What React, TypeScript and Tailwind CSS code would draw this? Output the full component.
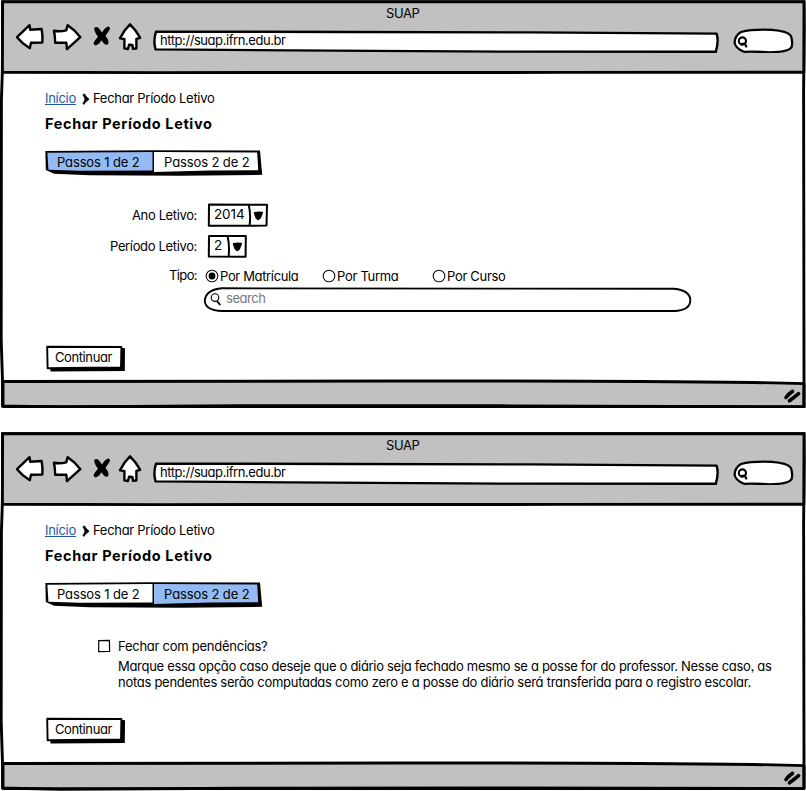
import { useLayoutEffect, useRef, useState } from "react";
import type { ReactNode } from "react";

// A single line of text whose tracking is computed so that it fills `w` pixels.
function Line({ w, text, className = "" }: { w: number; text: string; className?: string }) {
  const ref = useRef<HTMLSpanElement>(null);
  const [spacing, setSpacing] = useState(0);
  useLayoutEffect(() => {
    if (!ref.current) return;
    const natural = ref.current.getBoundingClientRect().width - spacing * text.length;
    setSpacing((w - natural) / text.length);
  }, [w, text]);
  return (
    <span ref={ref} className={`inline-block shrink-0 whitespace-nowrap ${className}`} style={{ letterSpacing: `${spacing}px` }}>
      {text}
    </span>
  );
}

function Toolbar() {
  return (
    <div className="flex h-8 items-start pl-[15px]">
      <svg className="h-8 w-[30px] shrink-0" viewBox="15 21 30 32" fill="#fff" stroke="#000" strokeWidth="2.4" strokeLinejoin="round">
        <path d="M17 37.2 L29.5 25.2 L30.2 29.8 L41.6 29 Q43 36 42.3 42.6 L31 42.8 L29.8 48.2 Q22 43.5 17 37.2Z" />
      </svg>
      <svg className="ml-1.5 h-8 w-8 shrink-0" viewBox="51 21 32 32" fill="#fff" stroke="#000" strokeWidth="2.4" strokeLinejoin="round">
        <path d="M54 30.8 Q60 32 66.2 30.4 L67.7 25.2 Q75 30 80.3 37.2 L67 49.2 L66.3 42.6 L55.2 42.8 Q55 36 54 30.8Z" />
      </svg>
      <svg className="ml-2 h-8 w-5 shrink-0" viewBox="91 21 20 32">
        <path d="M94.2 28 Q96.5 26 99 28.4 L102.2 32.6 Q104.5 27.4 108.5 26.6 Q110.4 27 109.6 29.8 L105.4 36 Q108.9 39.6 108.5 43.6 Q106.6 46 104.2 43.8 L101.2 40.2 Q99.4 44.6 95.4 45.4 Q92.8 44.6 94.2 41.6 L98 36.6 Q94.2 32.4 94.2 28Z" />
      </svg>
      <svg className="ml-1.5 h-8 w-[26px] shrink-0" viewBox="117 21 26 32" fill="#fff" stroke="#000" strokeWidth="2.4" strokeLinejoin="round">
        <path d="M130 24.3 Q136 30 140.2 37.8 L136.4 38.8 L136.4 48.6 L133 48.8 L132.4 45 L129 44.8 L128 49 L124.4 48.4 L124.4 39 L120 38.2 Q124 30 130 24.3Z" />
      </svg>
      <div className="relative ml-2.5 h-8 w-[567px] shrink-0 pl-[7px] pt-[11px] leading-4">
        <svg className="absolute inset-0 h-8 w-[567px]" viewBox="153 21 567 32" fill="#fff" stroke="#000" strokeWidth="2.4" strokeLinejoin="round">
          <path d="M156 31.6 L350 32 L530 32.4 L716.6 33.6 Q719 41 715.8 51.8 L500 51.6 L290 50.4 L155.6 49.4 Q153 41 156 31.6Z" />
        </svg>
        <Line w={125.5} text="http://suap.ifrn.edu.br" className="relative" />
      </div>
      <svg className="ml-3 h-8 w-[63px] shrink-0" viewBox="732 21 63 32" fill="#fff" stroke="#000" strokeWidth="2.3">
        <path d="M741 32 Q752 29 772 29.8 Q788 31 791 36 Q793 43 791.6 47 Q789 52 770 52.3 Q755 51.5 744 51.8 Q735 48 734.6 42.5 Q735 35.5 741 32Z" />
        <circle cx="742.4" cy="41" r="3.6" strokeWidth="2.1" />
        <path d="M740.5 44.4 L744.8 43.6 L746.6 47.4" strokeWidth="2.2" fill="none" />
      </svg>
    </div>
  );
}

function ResizeGrip() {
  return (
    <g fill="none" stroke="#000" strokeWidth="3.6" strokeLinecap="round">
      <path d="M786 397.5 Q789 393.5 792.5 391.4" />
      <path d="M789.5 400.8 Q794 397.4 798.6 393.6" />
    </g>
  );
}

function BrowserWindow({ tall, children }: { tall: boolean; children: ReactNode }) {
  return (
    <section className={`relative flex flex-col ${tall ? "h-[408px]" : "h-[359px]"}`}>
      <header className="relative mx-[2px] mt-[2px] h-[70px] bg-[#c1c1c1]">
        <div className="flex pl-[384px] pt-[3px] leading-4">
          <Line w={33.5} text="SUAP" />
        </div>
        <div className="-ml-[2px]">
          <Toolbar />
        </div>
      </header>
      <main className="min-h-0 flex-1">{children}</main>
      <footer className="h-[26px]" />
      {tall ? (
        <svg className="absolute inset-0 -z-10 h-[408px] w-[806px]" viewBox="0 0 806 408" fill="none" stroke="#000" strokeWidth="2.9" strokeLinejoin="round">
          <path d="M3 381.5 L400 381 Q700 380.6 804 383.6 L804 407 L400 406.6 L3 406.6Z" fill="#c1c1c1" />
          <ResizeGrip />
          <path d="M2.6 2 L2.4 70 L1.4 100 L1.2 340 L2.5 381 L2.5 406 L60 407 L240 405.8 L500 405.8 L804 406.8 L804 370 L803.6 90 L804.2 30 L804 2Z" />
        </svg>
      ) : (
        <svg className="absolute inset-0 -z-10 h-[359px] w-[806px]" viewBox="0 0 806 359" fill="none" stroke="#000" strokeWidth="2.9" strokeLinejoin="round">
          <path d="M3 331.5 L400 331 Q700 330.6 804 333.6 L804 356.6 L3 356.6Z" fill="#c1c1c1" />
          <g transform="translate(0 -50)">
            <ResizeGrip />
          </g>
          <path d="M2.6 1.8 L2.4 70 L1.4 100 L1.2 290 L2.5 331 L2.5 356 L60 357.4 L240 356.2 L500 356 L804 356.6 L804 320 L803.6 90 L804.2 30 L804 1.8Z" />
        </svg>
      )}
      <svg className="pointer-events-none absolute left-0 top-0 h-20 w-[806px]" viewBox="0 0 806 80" fill="none" stroke="#000" strokeWidth="2.9">
        <path d="M2.4 73 L2.6 1.8 L804 1.8 L803.8 73 M2.5 72.3 L160 72.6 L560 72.4 L804 72.2" />
      </svg>
    </section>
  );
}

function PageHeading() {
  return (
    <>
      <nav className="flex pl-11 pt-[18px] leading-4">
        <a href="#inicio" className="ml-px h-[15px] border-b border-[#1c5aa0] text-[#1c5aa0]">
          <Line w={31} text="Início" />
        </a>
        <svg className="ml-[6px] mt-[3px] h-3 w-2" viewBox="0 0 8 12" stroke="#000" strokeWidth=".6">
          <path d="M0.8 1.8 L2.4 0.8 Q4 3.8 7.2 6.2 Q4 8.4 2 11.4 L0.8 10.6 Q2.4 8.4 2.8 6.2 Q2.2 3.6 0.8 1.8Z" />
        </svg>
        <Line w={121.5} text="Fechar Príodo Letivo" className="ml-[3px]" />
      </nav>
      <h1 className="flex pl-[45px] pt-[8px] text-[14.5px] leading-5 font-bold">
        <Line w={167.5} text="Fechar Período Letivo" />
      </h1>
    </>
  );
}

function Steps({ active }: { active: 1 | 2 }) {
  return (
    <div className="relative ml-11 mt-[15px] flex h-[27px] w-[220px] pt-[5px] leading-4">
      <svg className="absolute inset-0 h-[27px] w-[220px]" viewBox="44 149 220 27">
        <path d="M45.4 151 L150 150.2 L260 150.6 L262.2 174.8 L180 175.8 L90 175.2 L54 173.8 L45.8 170Z" fill="#000" />
        <path d="M47.4 152.8 L152.5 152 L152.5 170.4 L80 170.8 L48.4 169.8Z" fill={active === 1 ? "#93baf2" : "#fff"} />
        <path d="M154 152 L257.2 152.6 L258.2 170.2 L210 170.6 L154 172Z" fill={active === 2 ? "#93baf2" : "#fff"} />
      </svg>
      <Line w={82.5} text="Passos 1 de 2" className="relative ml-[13px]" />
      <Line w={85.5} text="Passos 2 de 2" className="relative ml-[24.5px]" />
    </div>
  );
}

function Select({ value, wide }: { value: string; wide: boolean }) {
  return (
    <div className={`relative flex h-6 pl-[7px] pt-[3px] leading-4 ${wide ? "w-[62px]" : "w-10"}`}>
      {wide ? (
        <svg className="absolute inset-0 h-6 w-[62px]" viewBox="207 203 62 24" fill="#fff" stroke="#000" strokeWidth="2" strokeLinejoin="round">
          <path d="M209 204.6 L267 204.8 L266.5 225.6 L208.8 225.8Z M248.8 205 Q251 215 249.6 225.6" />
          <path d="M254.8 213 Q258 212.2 262 212.8 L259.8 218 L258 219.3 L256.4 217.6Z" fill="#000" />
        </svg>
      ) : (
        <svg className="absolute inset-0 h-6 w-10" viewBox="207 203 40 24" fill="#fff" stroke="#000" strokeWidth="2" strokeLinejoin="round">
          <path d="M209 205 L245.8 205 L245.6 225.8 L208.8 225.6Z M227.6 205 Q229.8 215 228.6 225.6" />
          <path d="M233.8 213 Q237 212.2 241 212.8 L239 218 L237.2 219.3 L235.4 217.6Z" fill="#000" />
        </svg>
      )}
      <Line w={wide ? 30.5 : 9} text={value} className="relative text-[13.5px]" />
    </div>
  );
}

function Radio({ text, w, checked = false }: { text: string; w: number; checked?: boolean }) {
  return (
    <label className="flex shrink-0">
      <svg className="mt-px h-[14px] w-[14px]" viewBox="0 0 14 14" fill="none" stroke="#111" strokeWidth="1.1">
        <circle cx="7" cy="7" r="5.8" />
        {checked && <circle cx="7" cy="7" r="3.4" fill="#000" stroke="none" />}
      </svg>
      <Line w={w} text={text} className="ml-px" />
    </label>
  );
}

function ContinueButton() {
  return (
    <button className="relative flex h-7 w-[82px] pl-[10px] pt-[4px] leading-4">
      <svg className="absolute inset-0 h-7 w-[82px]" viewBox="45 345 82 28">
        <path d="M50 350 L123 348 L125 348.2 L124.8 371 L50.5 371.4Z" fill="#000" />
        <path d="M47.2 346.8 L121.4 347 L121 367.4 L90 367.8 L47.6 368.2Z" fill="#fff" stroke="#000" strokeWidth="1.9" strokeLinejoin="round" />
      </svg>
      <Line w={57} text="Continuar" className="relative" />
    </button>
  );
}

export default function App() {
  return (
    <div className="relative isolate flex h-[791px] w-[806px] flex-col gap-6 overflow-hidden bg-white font-['Inter','Noto_Sans',sans-serif] text-[13px] text-black [font-feature-settings:'cv11','ss03']">
      <BrowserWindow tall>
        <PageHeading />
        <Steps active={1} />
        <div className="mt-[27px] flex leading-4">
          <div className="flex w-[197px] justify-end pt-[4px]">
            <Line w={65} text="Ano Letivo:" />
          </div>
          <div className="ml-[10px]">
            <Select value="2014" wide />
          </div>
        </div>
        <div className="mt-[7px] flex leading-4">
          <div className="flex w-[197px] justify-end pt-[4px]">
            <Line w={87} text="Período Letivo:" />
          </div>
          <div className="ml-[10px]">
            <Select value="2" wide={false} />
          </div>
        </div>
        <div className="mt-[10px] flex leading-4">
          <div className="flex w-[197px] justify-end">
            <Line w={28} text="Tipo:" className="-mt-px" />
          </div>
          <div className="ml-[8px] flex">
            <div className="w-[117px]"><Radio text="Por Matrícula" w={78.5} checked /></div>
            <div className="w-[110px]"><Radio text="Por Turma" w={61.5} /></div>
            <Radio text="Por Curso" w={58.5} />
          </div>
        </div>
        <div className="relative ml-[203px] mt-[2px] flex h-7 w-[490px] pl-[23px] pt-[4px] leading-4 text-[#77777d]">
          <svg className="absolute inset-0 h-7 w-[490px]" viewBox="203 286 490 28" fill="#fff" stroke="#000" strokeWidth="1.9">
            <path d="M222 288.3 L500 288.6 L674 288.8 Q690.3 290.5 690.3 300.5 Q690 310.5 674 311 L222 311 Q205 310.5 204.8 300.5 Q206 289.5 222 288.3Z" />
            <circle cx="215" cy="297.6" r="3.8" strokeWidth="1.1" />
            <path d="M217 301 L220.2 305" strokeWidth="2" />
          </svg>
          <Line w={39.5} text="search" className="relative" />
        </div>
        <div className="ml-[45px] mt-[31px]">
          <ContinueButton />
        </div>
      </BrowserWindow>

      <BrowserWindow tall={false}>
        <PageHeading />
        <Steps active={2} />
        <div className="mt-[30px] flex pl-[97px] leading-4">
          <svg className="mt-px h-[14px] w-[14px]" viewBox="0 0 14 14" fill="none" stroke="#000" strokeWidth="1.2">
            <path d="M1.8 1.6 L12.4 1.4 L12.6 12.4 L1.6 12.6Z" />
          </svg>
          <Line w={149.5} text="Fechar com pendências?" className="ml-[7px]" />
        </div>
        <div className="mt-1 flex flex-col items-start pl-[118px] leading-4">
          <Line w={653.5} text="Marque essa opção caso deseje que o diário seja fechado mesmo se a posse for do professor. Nesse caso, as" />
          <Line w={633} text="notas pendentes serão computadas como zero e a posse do diário será transferida para o registro escolar." />
        </div>
        <div className="ml-[45px] mt-[27px]">
          <ContinueButton />
        </div>
      </BrowserWindow>
    </div>
  );
}
